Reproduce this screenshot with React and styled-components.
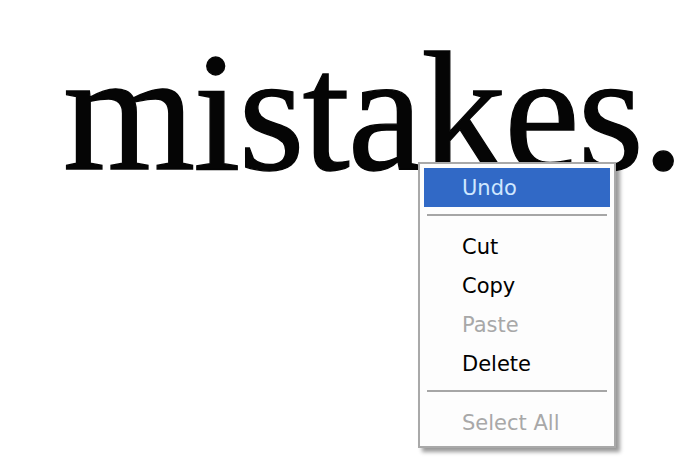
import React from 'react'
import styled, { createGlobalStyle } from 'styled-components';

const GlobalStyle = createGlobalStyle`
  html, body {
    margin: 0;
    padding: 0;
    background: #ffffff;
  }
`;

const Page = styled.div`
  position: relative;
  width: 680px;
  height: 474px;
  overflow: hidden;
  background: #ffffff;
`;

const Word = styled.h1`
  width: 617px;
  margin: 0;
  padding: 27px 0 0 63px;
  font-family: "Liberation Serif", "Times New Roman", serif;
  font-weight: normal;
  font-size: 170px;
  line-height: 1;
  letter-spacing: -2px;
  color: #050505;
  -webkit-text-stroke: 1.3px #050505;
  white-space: nowrap;
`;

const Menu = styled.ul`
  position: absolute;
  left: 418px;
  top: 162px;
  width: 186px;
  margin: 0;
  padding: 4px;
  list-style: none;
  background: #fdfdfd;
  border: 2px solid #a9a9a9;
  box-shadow: 4px 4px 4px rgba(0, 0, 0, 0.4);
  display: flex;
  flex-direction: column;
`;

const Item = styled.li`
  height: 39px;
  display: flex;
  align-items: center;
  padding-left: 38px;
  font-family: "DejaVu Sans", Tahoma, Verdana, sans-serif;
  font-size: 21px;
  background: ${p => (p.$active ? '#3169c6' : 'transparent')};
  color: ${p => (p.$active ? '#cfe7ff' : p.$disabled ? '#a8a8a8' : '#000000')};
`;

const Separator = styled.li`
  height: 2px;
  margin: 7px 3px 11px;
  background: #a6a6a6;
`;

const items = [
  { label: 'Undo', active: true },
  'sep',
  { label: 'Cut' },
  { label: 'Copy' },
  { label: 'Paste', disabled: true },
  { label: 'Delete' },
  'sep',
  { label: 'Select All', disabled: true },
];

const App = () => (
  <Page>
    <GlobalStyle />
    <Word>mistakes.</Word>
    <Menu>
      {items.map((it, i) =>
        it === 'sep' ? (
          <Separator key={i} />
        ) : (
          <Item key={i} $active={it.active} $disabled={it.disabled}>
            {it.label}
          </Item>
        )
      )}
    </Menu>
  </Page>
)

export default App
